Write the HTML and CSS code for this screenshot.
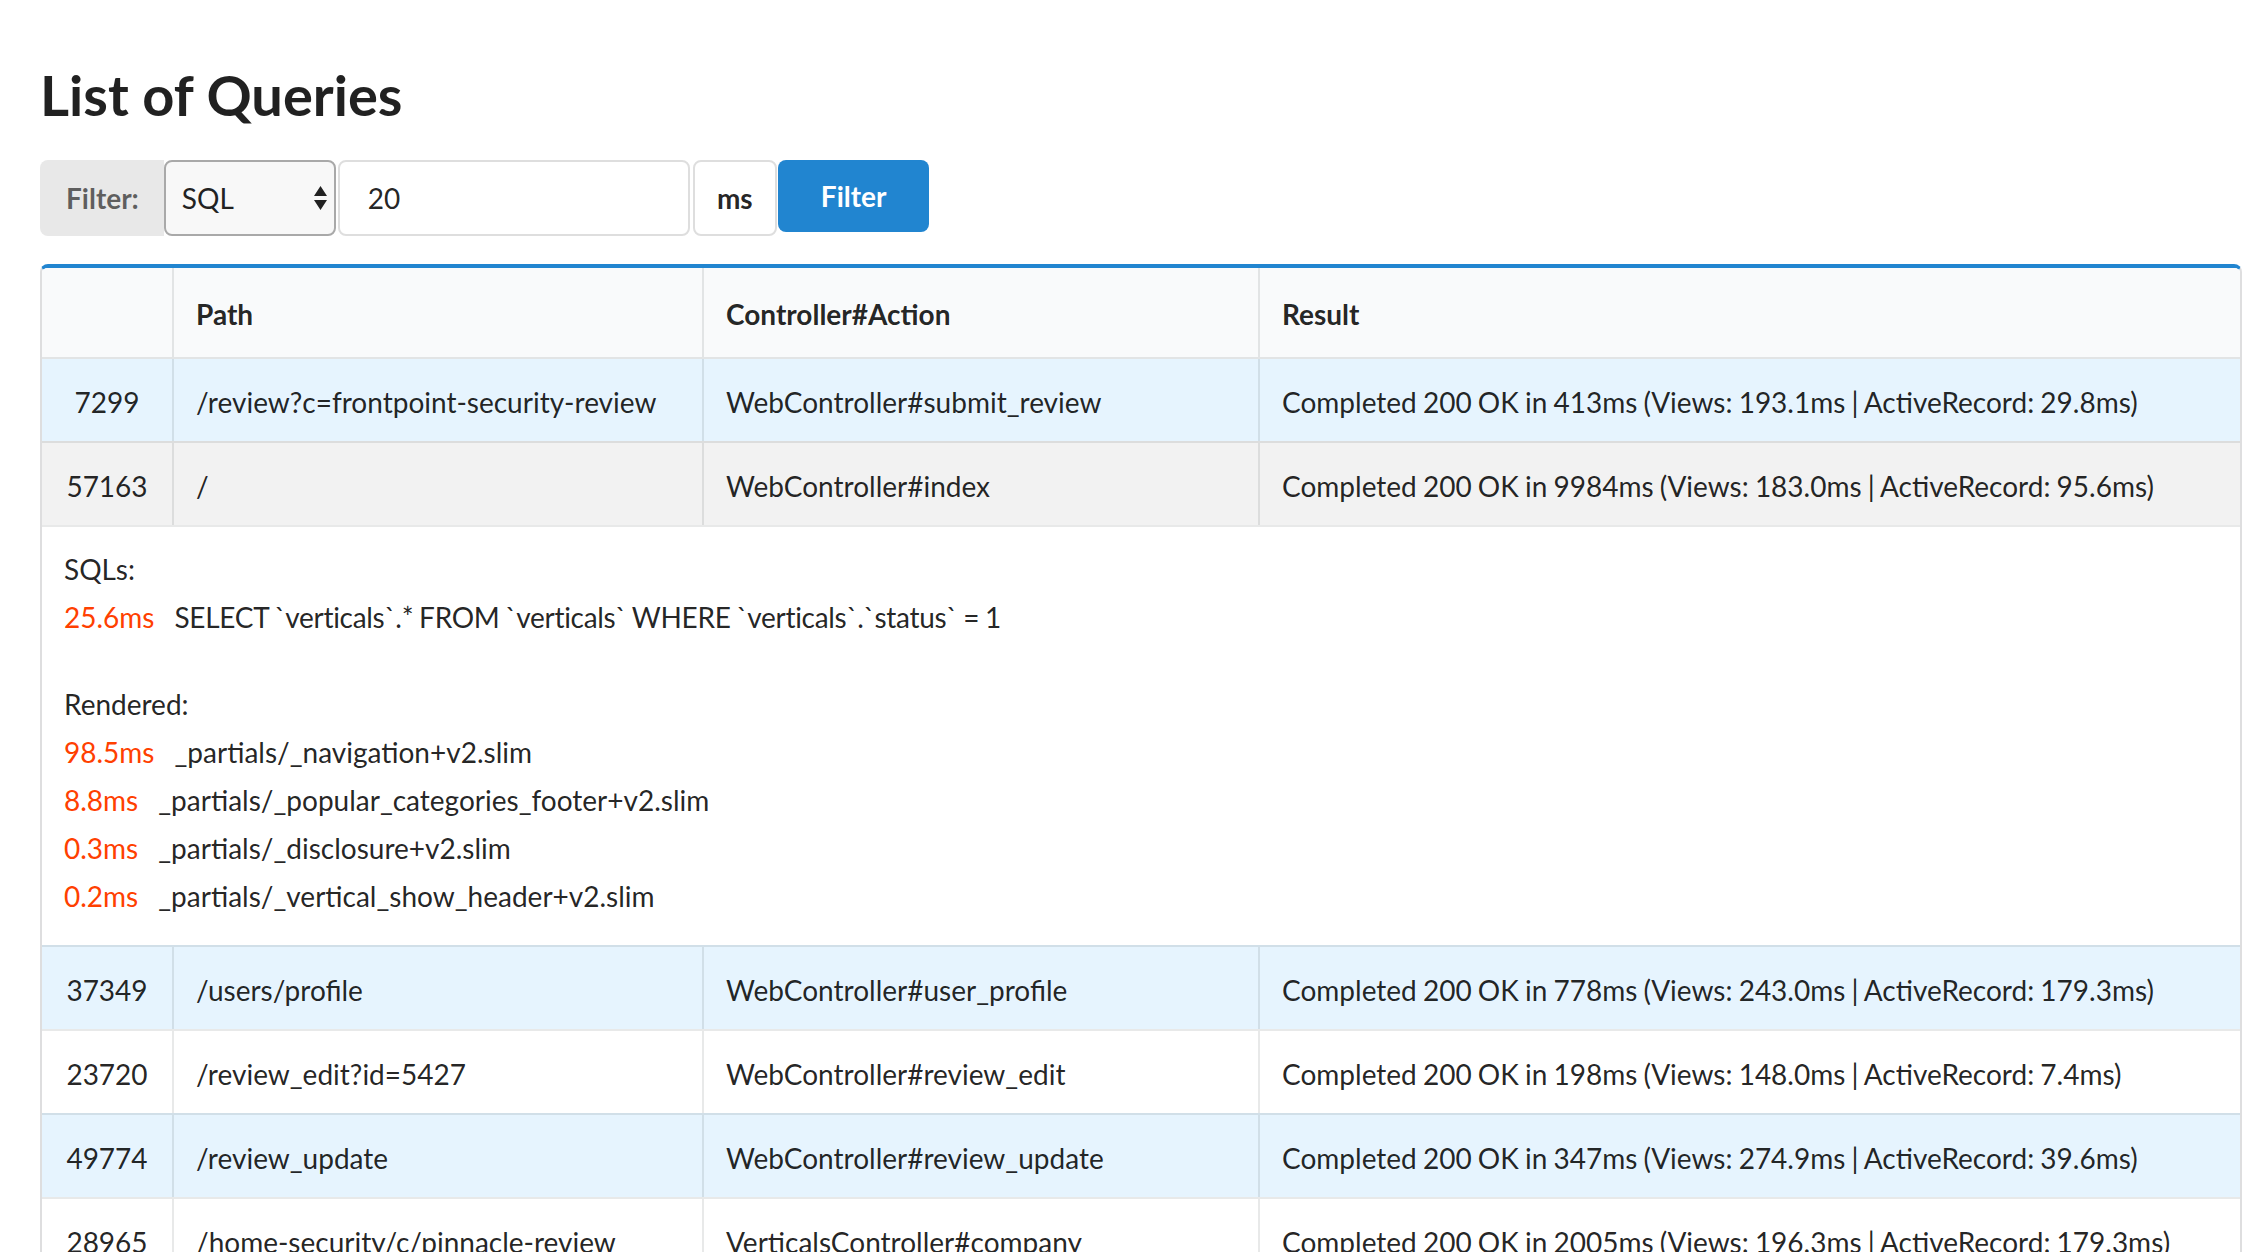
FILE: index.html
```html
<!DOCTYPE html>
<html lang="en">
<head>
<meta charset="utf-8">
<title>List of Queries</title>
<link rel="stylesheet" href="styles.css">
</head>
<body>
<div class="page">
  <h1 class="title">List of Queries</h1>
  <form class="filter">
    <div class="filter-label">Filter:</div>
    <div class="select">
      <span>SQL</span>
      <svg class="arrows" width="13" height="24" viewBox="0 0 13 24"><path d="M0 10 L6.5 0 L13 10 Z M0 14 L13 14 L6.5 24 Z" fill="#222"/></svg>
    </div>
    <input class="threshold" type="text" value="20">
    <div class="unit">ms</div>
    <button class="btn" type="button">Filter</button>
  </form>

  <div class="table">
    <div class="row head">
      <div class="cell id"></div>
      <div class="cell">Path</div>
      <div class="cell">Controller#Action</div>
      <div class="cell">Result</div>
    </div>
    <div class="row blue first">
      <div class="cell id">7299</div>
      <div class="cell">/review?c=frontpoint-security-review</div>
      <div class="cell">WebController#submit_review</div>
      <div class="cell result">Completed 200 OK in 413ms (Views: 193.1ms | ActiveRecord: 29.8ms)</div>
    </div>
    <div class="row hover">
      <div class="cell id">57163</div>
      <div class="cell">/</div>
      <div class="cell">WebController#index</div>
      <div class="cell result">Completed 200 OK in 9984ms (Views: 183.0ms | ActiveRecord: 95.6ms)</div>
    </div>
    <div class="detail">
      <div class="group">
        <div class="line">SQLs:</div>
        <div class="line"><span class="ms">25.6ms</span><span class="sql">SELECT `verticals`.* FROM `verticals` WHERE `verticals`.`status` = 1</span></div>
      </div>
      <div class="group">
        <div class="line">Rendered:</div>
        <div class="line"><span class="ms">98.5ms</span>_partials/_navigation+v2.slim</div>
        <div class="line"><span class="ms">8.8ms</span>_partials/_popular_categories_footer+v2.slim</div>
        <div class="line"><span class="ms">0.3ms</span>_partials/_disclosure+v2.slim</div>
        <div class="line"><span class="ms">0.2ms</span>_partials/_vertical_show_header+v2.slim</div>
      </div>
    </div>
    <div class="row blue">
      <div class="cell id">37349</div>
      <div class="cell">/users/profile</div>
      <div class="cell">WebController#user_profile</div>
      <div class="cell result">Completed 200 OK in 778ms (Views: 243.0ms | ActiveRecord: 179.3ms)</div>
    </div>
    <div class="row">
      <div class="cell id">23720</div>
      <div class="cell">/review_edit?id=5427</div>
      <div class="cell">WebController#review_edit</div>
      <div class="cell result">Completed 200 OK in 198ms (Views: 148.0ms | ActiveRecord: 7.4ms)</div>
    </div>
    <div class="row blue">
      <div class="cell id">49774</div>
      <div class="cell">/review_update</div>
      <div class="cell">WebController#review_update</div>
      <div class="cell result">Completed 200 OK in 347ms (Views: 274.9ms | ActiveRecord: 39.6ms)</div>
    </div>
    <div class="row">
      <div class="cell id">28965</div>
      <div class="cell">/home-security/c/pinnacle-review</div>
      <div class="cell">VerticalsController#company</div>
      <div class="cell result">Completed 200 OK in 2005ms (Views: 196.3ms | ActiveRecord: 179.3ms)</div>
    </div>
  </div>
</div>
</body>
</html>
```

FILE: styles.css
```css
html, body {
  margin: 0;
  padding: 0;
  height: 100%;
  overflow: hidden;
  background: #ffffff;
}

body {
  font-family: Lato, "Helvetica Neue", Arial, sans-serif;
  font-size: 28px;
  line-height: 40px;
  color: rgba(0, 0, 0, 0.87);
}

.page {
  padding: 59px 0 0 40px;
}

.title {
  margin: 0 0 29px;
  font-size: 56px;
  line-height: 72px;
  font-weight: 700;
  color: rgba(0, 0, 0, 0.87);
}

/* Filter bar */
.filter {
  display: flex;
  align-items: flex-start;
  margin: 0;
}

.filter-label {
  height: 76px;
  box-sizing: border-box;
  display: flex;
  align-items: center;
  padding: 0 25px 0 26px;
  background: #e8e8e8;
  border-radius: 8px 0 0 8px;
  font-weight: 700;
  color: rgba(0, 0, 0, 0.6);
}

.select {
  width: 172px;
  height: 76px;
  box-sizing: border-box;
  display: flex;
  align-items: center;
  justify-content: space-between;
  padding: 0 7px 0 16px;
  background: #f8f8f8;
  border: 2px solid #a9a9a9;
  border-radius: 8px;
  color: #222;
}

.arrows {
  display: block;
}

.threshold {
  margin: 0 0 0 2px;
  width: 352px;
  height: 76px;
  box-sizing: border-box;
  padding: 0 28px;
  border: 2px solid #dedede;
  border-radius: 8px;
  background: #fff;
  font-family: inherit;
  font-size: 28px;
  color: rgba(0, 0, 0, 0.87);
  outline: none;
}

.unit {
  margin-left: 3px;
  width: 84px;
  height: 76px;
  box-sizing: border-box;
  display: flex;
  align-items: center;
  justify-content: center;
  border: 2px solid #dedede;
  border-radius: 8px;
  background: #fff;
  font-weight: 700;
}

.btn {
  margin-left: 1px;
  height: 72px;
  box-sizing: border-box;
  padding: 0 43px;
  border: none;
  border-radius: 8px;
  background: #2185d0;
  color: #fff;
  font-family: inherit;
  font-size: 28px;
  font-weight: 700;
  line-height: 28px;
}

/* Table */
.table {
  margin-top: 28px;
  width: 2202px;
  box-sizing: border-box;
  border: 2px solid rgba(34, 36, 38, 0.15);
  border-top: 4px solid #2185d0;
  border-bottom: none;
  border-radius: 8px 8px 0 0;
  overflow: hidden;
}

.row {
  display: grid;
  grid-template-columns: 130px 530px 556px 982px;
  border-top: 2px solid rgba(34, 36, 38, 0.1);
}

.row.first {
  border-top: none;
}

.row.head {
  border-top: none;
  border-bottom: 2px solid rgba(34, 36, 38, 0.1);
  background: #f9fafb;
  font-weight: 700;
}

.row.blue {
  background: #e6f4fe;
}

.row.hover {
  background: #f2f2f2;
}

.cell {
  box-sizing: border-box;
  padding: 23px 22px 19px;
  white-space: nowrap;
  border-left: 2px solid rgba(34, 36, 38, 0.1);
}

.head .cell {
  padding: 26px 22px 23px;
}

.cell.id {
  border-left: none;
  text-align: center;
}

.cell.result {
  word-spacing: -1px;
}

.detail {
  border-top: 2px solid rgba(34, 36, 38, 0.1);
  padding: 18px 22px 25px;
  line-height: 48px;
  display: flex;
  flex-direction: column;
  gap: 39px;
}

.ms {
  color: #ff4000;
  margin-right: 20px;
}

.sql {
  word-spacing: -1px;
  letter-spacing: -0.3px;
}
```
